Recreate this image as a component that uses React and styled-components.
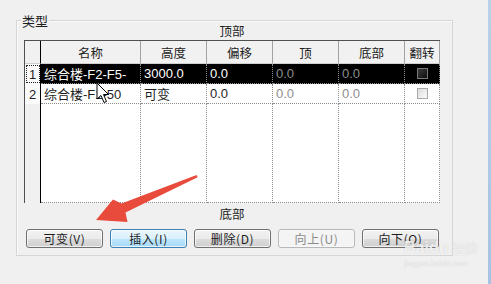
import React from 'react';
import styled, { createGlobalStyle } from 'styled-components';

const Global = createGlobalStyle`
  html, body {
    margin: 0;
    padding: 0;
    background: #f0f0f0;
  }
  body {
    font-family: "Liberation Sans", "Noto Sans CJK SC", sans-serif;
    color: #1e1e1e;
  }
`;

const Page = styled.div`
  position: relative;
  width: 491px;
  height: 284px;
  overflow: hidden;
  display: flex;
  padding: 20px 0 0 16px;
  box-sizing: border-box;
  background: #f0f0f0;
`;

const Group = styled.div`
  position: relative;
  width: 437px;
  height: 236px;
  box-sizing: border-box;
  border: 1px solid #d6d6d6;
  box-shadow: inset 1px 1px 0 #fbfbfb;
  padding: 0 12px 0 7px;
  display: flex;
  flex-direction: column;
`;

const Legend = styled.span`
  position: absolute;
  top: -8px;
  left: 4px;
  padding: 0 1px;
  background: #f0f0f0;
  font-size: 13px;
  line-height: 15px;
  font-family: "Noto Sans CJK SC", sans-serif;
`;

const EdgeLabel = styled.div`
  width: 416px;
  height: ${p => p.$h}px;
  line-height: ${p => p.$h}px;
  text-align: center;
  font-size: 12.5px;
  font-family: "Noto Sans CJK SC", sans-serif;
`;

const Grid = styled.div`
  width: 416px;
  height: 163px;
  box-sizing: border-box;
  display: grid;
  grid-template-columns: 16px 100px 66px 66px 66px 66px 35px;
  grid-template-rows: 23px 20px 20px 1fr;
  border-left: 1px solid #505050;
  border-top: 1px solid #505050;
  background: #fff;
`;

const HeadCell = styled.div`
  background: #f1f1f1;
  border-right: 1px solid ${p => (p.$num ? '#000' : '#a3a3a3')};
  border-bottom: 1px solid #cfcfcf;
  display: flex;
  align-items: center;
  justify-content: center;
  font-size: 12.5px;
  font-family: "Noto Sans CJK SC", sans-serif;
  color: #222;
`;

const RowNum = styled.div`
  background: ${p => (p.$fill ? '#f0f0f0' : '#fafafa')};
  border-right: 1px solid #000;
  outline: ${p => (p.$focus ? '1px dotted #222' : 'none')};
  outline-offset: -2px;
  display: flex;
  align-items: center;
  justify-content: center;
  font-size: 13px;
  color: #222;
`;

const Cell = styled.div`
  background: ${p => (p.$selected ? '#000' : '#fff')};
  color: ${p => (p.$muted ? '#8e8e8e' : p.$selected ? '#fff' : '#1e1e1e')};
  border-right: 1px dotted #8c8c8c;
  border-bottom: 1px dotted #8c8c8c;
  display: flex;
  align-items: center;
  justify-content: ${p => (p.$center ? 'center' : 'flex-start')};
  padding-left: ${p => (p.$center ? 0 : 3)}px;
  font-size: 13px;
  white-space: nowrap;
  overflow: hidden;
`;

const Check = styled.span`
  width: 11px;
  height: 11px;
  box-sizing: border-box;
  border: 1px solid ${p => (p.$dark ? '#7a7a7a' : '#a8a8a8')};
  background: ${p =>
    p.$dark
      ? 'linear-gradient(135deg, #3c3c3c, #0c0c0c)'
      : 'linear-gradient(135deg, #dcdcdc, #fbfbfb)'};
`;

const ButtonRow = styled.div`
  display: flex;
  gap: 7px;
  padding-left: 2px;
  margin-top: 4px;
`;

const Button = styled.div`
  width: 77px;
  height: 19px;
  box-sizing: border-box;
  border-radius: 3px;
  display: flex;
  align-items: center;
  justify-content: center;
  font-size: 12px;
  font-family: "Noto Sans CJK SC", sans-serif;
  letter-spacing: 0.6px;
  border: 1px solid ${p => (p.$primary ? '#3c7fb1' : p.$disabled ? '#b5b8ba' : '#707070')};
  color: ${p => (p.$disabled ? '#8a8a8a' : '#1e1e1e')};
  background: ${p =>
    p.$primary
      ? 'linear-gradient(#eaf6fd 0%, #d9f0fc 50%, #bee6fd 51%, #a7d9f5 100%)'
      : p.$disabled
      ? '#f4f4f4'
      : 'linear-gradient(#f2f2f2 0%, #ebebeb 50%, #dddddd 51%, #cfcfcf 100%)'};
  box-shadow: inset 0 0 0 1px ${p => (p.$disabled ? '#f8f8f8' : 'rgba(255,255,255,0.7)')};
`;

const Spacer = styled.div`
  flex: 1;
`;

const WindowEdge = styled.div`
  width: 3px;
  margin-top: -20px;
  background: linear-gradient(#b9d1ea, #a6c3e3);
`;

const Overlay = styled.svg`
  position: absolute;
  left: 0;
  top: 0;
  pointer-events: none;
`;

const Watermark = styled.div`
  position: absolute;
  left: 404px;
  top: 240px;
  width: 64px;
  color: rgba(255, 255, 255, 0.8);
  text-shadow: 0 0 1px rgba(140, 140, 140, 0.5);
  line-height: 1;
  white-space: nowrap;
`;

const MarkTitle = styled.div`
  display: flex;
  align-items: baseline;
  gap: 3px;
  font-family: "Liberation Sans", sans-serif;
  font-weight: bold;
  font-size: 16px;
  span {
    font-family: "Noto Sans CJK SC", sans-serif;
    font-weight: normal;
    font-size: 13px;
  }
`;

const MarkUrl = styled.div`
  margin-top: 3px;
  font-family: "Liberation Serif", serif;
  font-size: 8.5px;
`;

const headers = ['名称', '高度', '偏移', '顶', '底部', '翻转'];

const rows = [
  { n: 1, name: '综合楼-F2-F5-', h: '3000.0', off: '0.0', top: '0.0', bot: '0.0', sel: true },
  { n: 2, name: '综合楼-F1-50', h: '可变', off: '0.0', top: '0.0', bot: '0.0', sel: false },
];

export default function App() {
  return (
    <>
      <Global />
      <Page>
        <Group>
          <Legend>类型</Legend>
          <EdgeLabel $h={19}>顶部</EdgeLabel>
          <Grid>
            <HeadCell $num />
            {headers.map(h => (
              <HeadCell key={h}>{h}</HeadCell>
            ))}
            {rows.map(r => (
              <React.Fragment key={r.n}>
                <RowNum $focus={r.sel}>{r.n}</RowNum>
                <Cell $selected={r.sel}>{r.name}</Cell>
                <Cell $selected={r.sel}>{r.h}</Cell>
                <Cell $selected={r.sel}>{r.off}</Cell>
                <Cell $selected={r.sel} $muted>{r.top}</Cell>
                <Cell $selected={r.sel} $muted>{r.bot}</Cell>
                <Cell $selected={r.sel} $center>
                  <Check $dark={r.sel} />
                </Cell>
              </React.Fragment>
            ))}
            <RowNum $fill />
            {headers.map(h => (
              <Cell key={h} />
            ))}
          </Grid>
          <EdgeLabel $h={22}>底部</EdgeLabel>
          <ButtonRow>
            <Button>可变(V)</Button>
            <Button $primary>插入(I)</Button>
            <Button>删除(D)</Button>
            <Button $disabled>向上(U)</Button>
            <Button>向下(O)</Button>
          </ButtonRow>
        </Group>
        <Spacer />
        <WindowEdge />

        <Watermark>
          <MarkTitle>
            Baidu<span>经验</span>
          </MarkTitle>
          <MarkUrl>jingyan.baidu.com</MarkUrl>
        </Watermark>

        <Overlay width="491" height="284" viewBox="0 0 491 284">
          <path
            d="M196.6 175.1 L121.5 203.4 L113 199.5 L96 220 L127.5 222 L125.5 212.6 L197.6 177.2 Z"
            fill="#e84a3c"
          />
          <path
            d="M97 83 L97 99 L101 95.5 L104 102.5 L106.5 101.5 L103.5 94.5 L108.5 94.5 Z"
            fill="#fff"
            stroke="#000"
            strokeWidth="1"
            strokeLinejoin="round"
          />
        </Overlay>
      </Page>
    </>
  );
}
